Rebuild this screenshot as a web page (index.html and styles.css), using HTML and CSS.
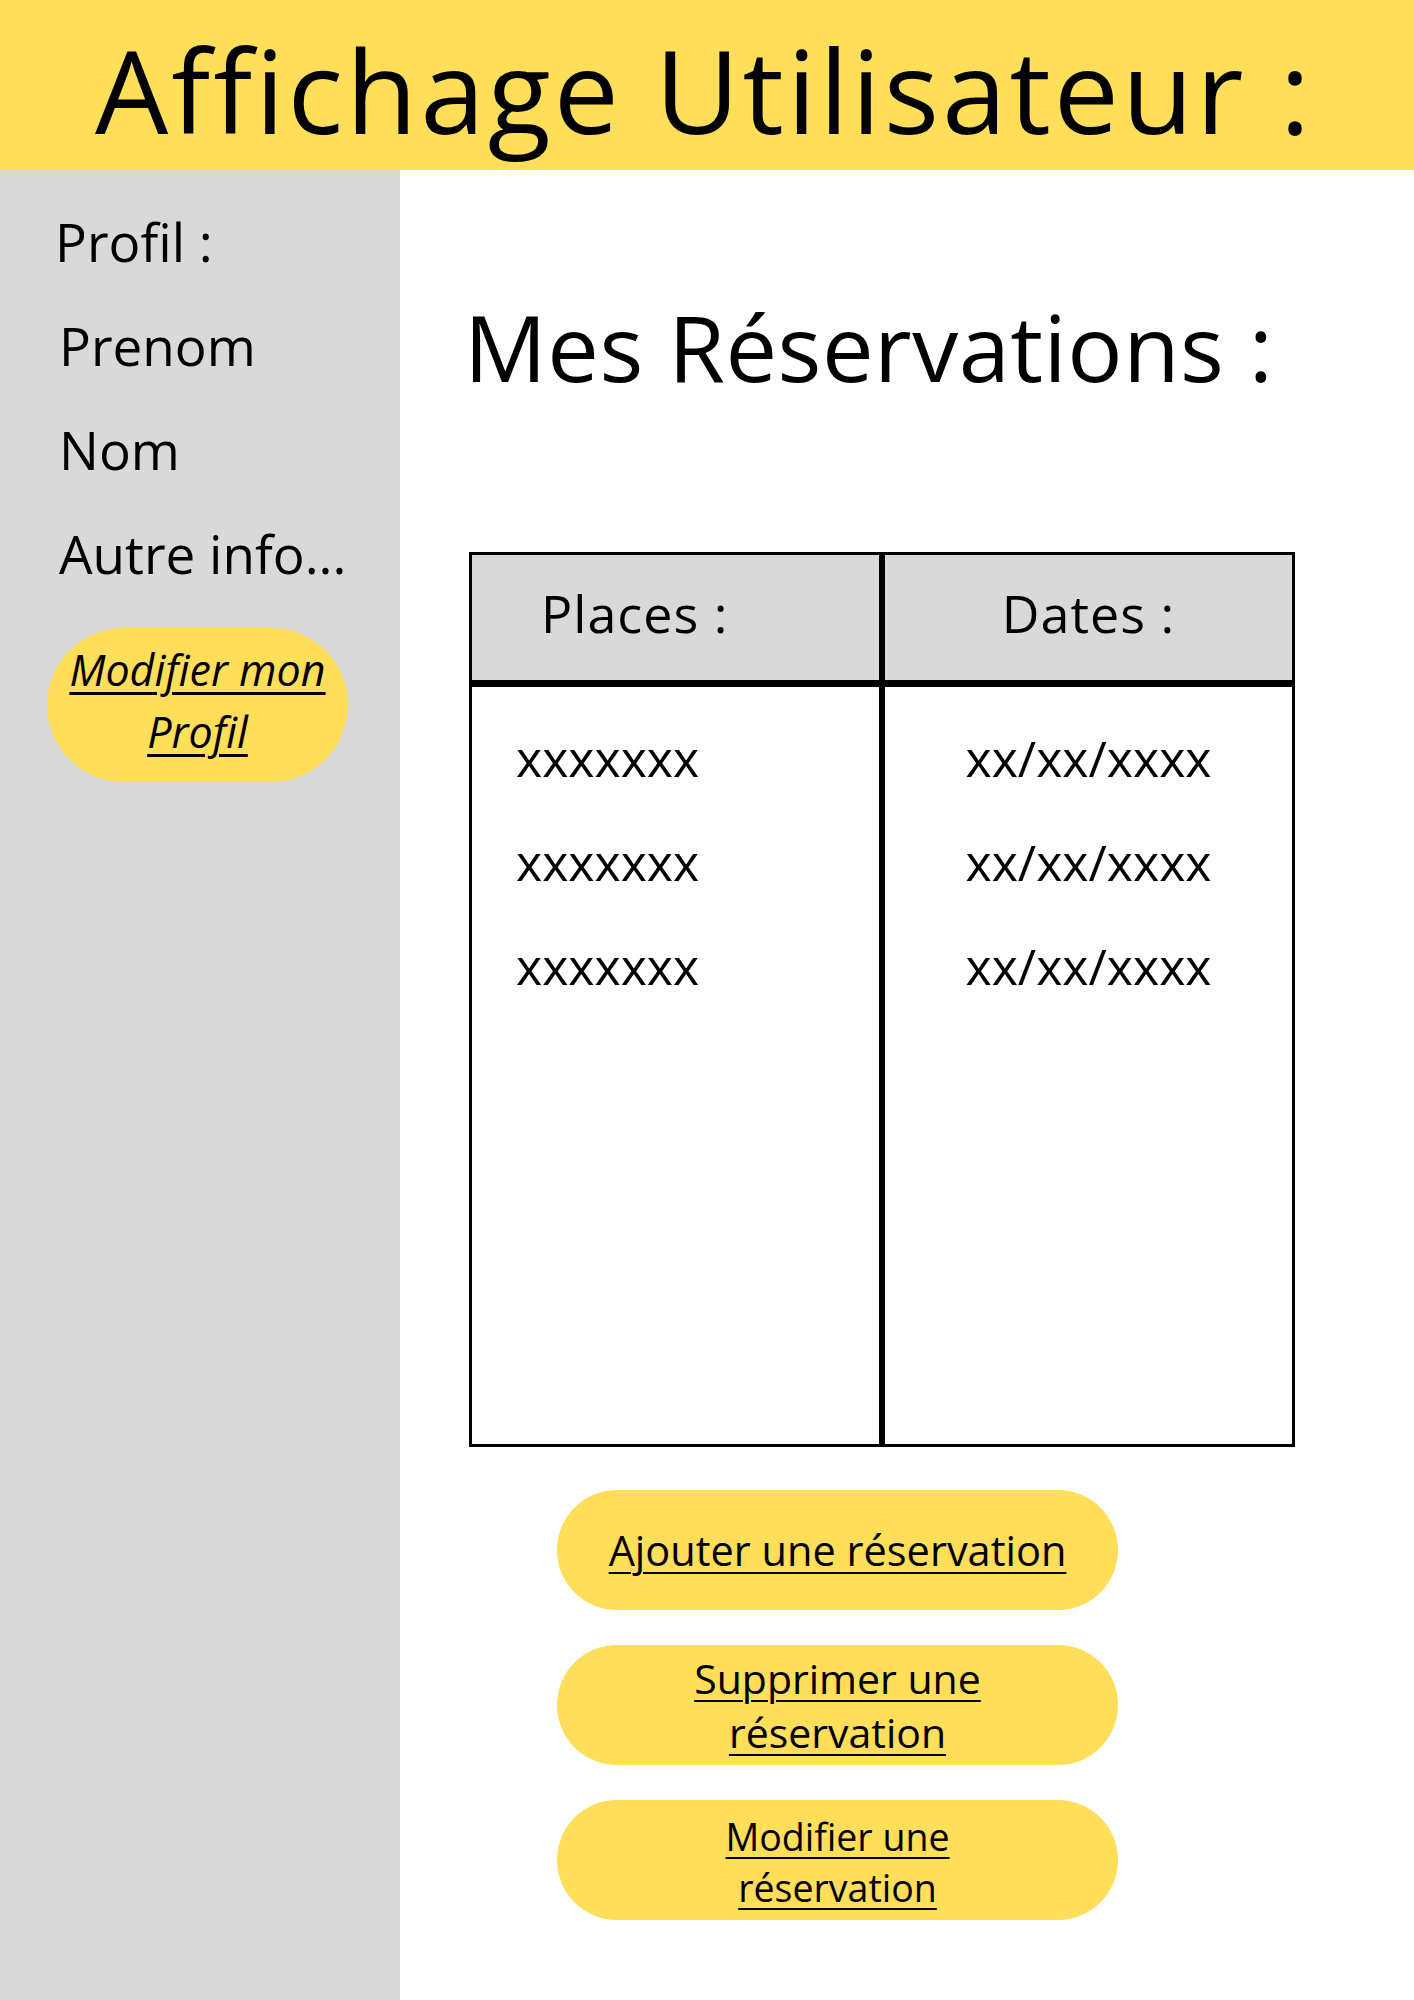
FILE: index.html
```html
<!DOCTYPE html>
<html lang="fr">
<head>
<meta charset="utf-8">
<title>Affichage Utilisateur</title>
<link rel="stylesheet" href="styles.css">
</head>
<body>
<header class="topbar">
  <h1 class="topbar-title">Affichage Utilisateur :</h1>
</header>
<div class="layout">
  <aside class="sidebar">
    <p class="side-item side-head">Profil :</p>
    <p class="side-item">Prenom</p>
    <p class="side-item">Nom</p>
    <p class="side-item">Autre info...</p>
    <a class="pill pill-profile" href="#">Modifier mon<br>Profil</a>
  </aside>
  <main class="content">
    <h2 class="content-title">Mes Réservations :</h2>
    <div class="table">
      <div class="cell head head-left">Places :</div>
      <div class="cell head head-right">Dates :</div>
      <div class="cell body body-left">
        <div class="row">xxxxxxx</div>
        <div class="row">xxxxxxx</div>
        <div class="row">xxxxxxx</div>
      </div>
      <div class="cell body body-right">
        <div class="row">xx/xx/xxxx</div>
        <div class="row">xx/xx/xxxx</div>
        <div class="row">xx/xx/xxxx</div>
      </div>
    </div>
    <div class="actions">
      <a class="pill pill-action pill-add" href="#">Ajouter une réservation</a>
      <a class="pill pill-action pill-del" href="#">Supprimer une<br>réservation</a>
      <a class="pill pill-action pill-edit" href="#">Modifier une<br>réservation</a>
    </div>
  </main>
</div>
</body>
</html>
```

FILE: styles.css
```css
* { box-sizing: border-box; }
html, body { margin: 0; padding: 0; }
body {
  width: 1414px;
  min-height: 2000px;
  background: #ffffff;
  color: #000;
  font-family: "Open Sans", "Noto Sans", sans-serif;
  display: flex;
  flex-direction: column;
}
.topbar {
  height: 170px;
  background: #FFDE59;
  display: flex;
  align-items: center;
  justify-content: center;
}
.topbar-title {
  margin: 0;
  font-weight: 400;
  font-size: 116px;
  line-height: 1;
  letter-spacing: 3px;
  transform: translate(-3px, 4px);
}
.layout {
  flex: 1;
  display: flex;
}
.sidebar {
  width: 400px;
  flex: none;
  background: #D9D9D9;
  padding: 20px 0 0 55px;
  display: flex;
  flex-direction: column;
  align-items: flex-start;
}
.side-item {
  margin: 0;
  font-size: 53px;
  line-height: 104px;
  padding-left: 4px;
}
.side-head { padding-left: 0; }
.pill {
  background: #FFDE59;
  color: #000;
  text-decoration: underline;
  text-decoration-thickness: 2px;
  text-underline-offset: 5px;
  display: flex;
  align-items: center;
  justify-content: center;
  text-align: center;
  border-radius: 60px;
}
.pill-profile {
  margin: 22px 0 0 -8px;
  width: 301px;
  height: 154px;
  font-style: italic;
  font-size: 43px;
  line-height: 62px;
  border-radius: 77px;
  padding-bottom: 8px;
  text-decoration-thickness: 3px;
  text-underline-offset: 6px;
}
.content {
  flex: 1;
  padding: 0 0 0 69px;
}
.content-title {
  margin: 0;
  padding-top: 115px;
  font-weight: 400;
  font-size: 92px;
  line-height: 124px;
  letter-spacing: 0.5px;
  transform: translateX(-5px);
}
.table {
  margin-top: 143px;
  width: 826px;
  display: grid;
  grid-template-columns: 413px 413px;
  grid-template-rows: 132px 763px;
}
.cell {
  border: 3px solid #000;
}
.head {
  background: #D9D9D9;
  font-size: 52px;
  letter-spacing: 1px;
  display: flex;
  align-items: center;
  padding-bottom: 11px;
  border-bottom-width: 4px;
}
.head-left { padding-left: 69px; }
.head-right { justify-content: center; }
.body { padding-top: 19px; font-size: 50px; }
.body-left .row { padding-left: 44px; }
.body-right .row { text-align: center; }
.body .row { line-height: 104px; }
.actions {
  margin: 43px 0 0 88px;
  width: 561px;
  display: flex;
  flex-direction: column;
  gap: 35px;
}
.pill-action {
  height: 120px;
  line-height: 54px;
  text-underline-offset: 6px;
}
.pill-add { font-size: 41.5px; }
.pill-del { font-size: 41px; }
.pill-edit { font-size: 37.5px; line-height: 51px; padding-top: 3px; }
```
